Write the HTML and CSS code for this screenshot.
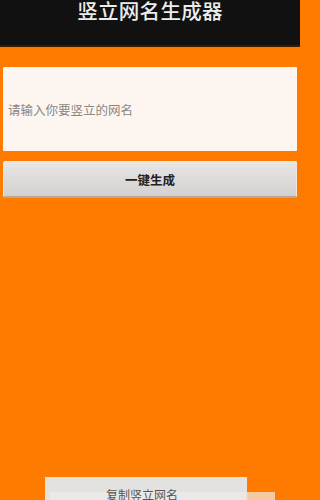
FILE: index.html
```html
<!DOCTYPE html>
<html lang="zh">
<head>
<meta charset="utf-8">
<link rel="stylesheet" href="styles.css">
</head>
<body>
<div class="app">
  <header class="titlebar"><h1 class="title">竖立网名生成器</h1></header>
  <main class="content">
    <div class="input"><span class="placeholder">请输入你要竖立的网名</span></div>
    <button class="btn">一键生成</button>
  </main>
  <footer class="footer">
    <div class="copy"><span class="copy-label">复制竖立网名</span></div>
  </footer>
</div>
</body>
</html>
```
FILE: styles.css
```css
html, body {
  margin: 0;
  padding: 0;
  background: #fe7b00;
}
.app {
  width: 300px;
  height: 500px;
  overflow: hidden;
  display: flex;
  flex-direction: column;
  font-family: "Noto Sans CJK SC", "Noto Sans", sans-serif;
  background: #fe7b00;
}
.titlebar {
  height: 45px;
  background: #111111;
  border-bottom: 2px solid #3a1a00;
  display: flex;
  justify-content: center;
  flex-shrink: 0;
}
.title {
  margin: 0;
  font-size: 20.5px;
  line-height: 21px;
  font-weight: 500;
  color: #ececec;
  letter-spacing: 0.3px;
}
.content {
  padding: 20px 3px 0 3px;
  display: flex;
  flex-direction: column;
  gap: 10px;
}
.input {
  height: 84px;
  background: #fdf6f0;
  border-radius: 1px;
  display: flex;
  align-items: center;
  padding-left: 5px;
  box-sizing: border-box;
}
.placeholder {
  font-size: 12.5px;
  color: #8a8684;
}
.btn {
  height: 37px;
  margin: 0;
  border: 1px solid #f1e6dc;
  border-bottom: 2px solid #b8a89a;
  border-radius: 2px;
  background: linear-gradient(#e8e6e4, #d3d1cf);
  font-family: inherit;
  font-size: 12.5px;
  font-weight: 700;
  color: #222;
  padding: 0;
}
.footer {
  margin-top: auto;
  padding-left: 45px;
  position: relative;
}
.copy {
  width: 202px;
  height: 23px;
  background: #e4e2e0;
  position: relative;
  display: flex;
  justify-content: center;
}
.footer::after {
  content: "";
  position: absolute;
  left: 50px;
  top: 15px;
  width: 225px;
  height: 8px;
  background: linear-gradient(to right, #ebe9e7 0, #ebe9e7 87%, #f6c9a0 88%, #f6c9a0 100%);
}
.copy-label {
  position: absolute;
  top: 13px;
  z-index: 1;
  font-size: 12px;
  line-height: 10px;
  color: #555;
  margin-left: -8px;
}
```
